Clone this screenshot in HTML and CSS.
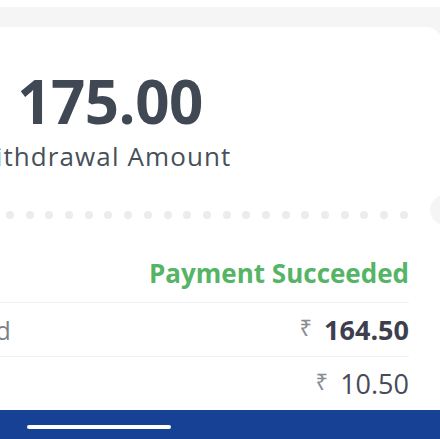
FILE: index.html
```html
<!DOCTYPE html>
<html>
<head>
<meta charset="utf-8">
<link rel="stylesheet" href="styles.css">
</head>
<body>
<div class="screen">
  <div class="top-card"></div>
  <div class="ticket">
    <div class="amount-block">
      <div class="amount">175.00</div>
      <div class="amount-label">Withdrawal Amount</div>
    </div>
    <div class="perforation">
      <span class="dot"></span><span class="dot"></span><span class="dot"></span><span class="dot"></span><span class="dot"></span><span class="dot"></span><span class="dot"></span><span class="dot"></span><span class="dot"></span><span class="dot"></span><span class="dot"></span><span class="dot"></span><span class="dot"></span><span class="dot"></span><span class="dot"></span><span class="dot"></span><span class="dot"></span><span class="dot"></span><span class="dot"></span><span class="dot"></span><span class="dot"></span>
      <span class="notch"></span>
    </div>
    <div class="details">
      <div class="status">Payment Succeeded</div>
      <div class="row">
        <span class="label">Amount Credited</span>
        <span class="value strong"><span class="rupee">₹</span>164.50</span>
      </div>
      <div class="row">
        <span class="label">Fee</span>
        <span class="value"><span class="rupee">₹</span>10.50</span>
      </div>
    </div>
  </div>
  <div class="nav-bar"><span class="home-indicator"></span></div>
</div>
</body>
</html>
```
FILE: styles.css
```css
html, body {
  margin: 0;
  padding: 0;
}
body {
  background: #f5f5f6;
  font-family: "Open Sans", "Noto Sans", sans-serif;
  overflow: hidden;
}
.screen {
  width: 440px;
  height: 439px;
  display: flex;
  flex-direction: column;
  overflow: hidden;
}
.top-card {
  height: 7px;
  background: #ffffff;
  margin-left: -200px;
  margin-right: -6px;
  border-radius: 0 0 16px 16px;
  flex: none;
}
.ticket {
  margin-top: 20px;
  margin-left: -200px;
  margin-right: -2px;
  background: #ffffff;
  border-radius: 16px 16px 0 0;
  flex: 1;
  display: flex;
  flex-direction: column;
  position: relative;
}
.amount-block {
  width: 270px;
  margin-left: 171px;
  padding-top: 36px;
  display: flex;
  flex-direction: column;
  align-items: center;
}
.amount {
  font-size: 60px;
  font-weight: 700;
  color: #3f4853;
  line-height: 76px;
  letter-spacing: -0.5px;
  padding-left: 8px;
}
.amount-label {
  font-size: 26px;
  color: #465059;
  line-height: 34px;
  letter-spacing: 1.1px;
  white-space: nowrap;
  padding-right: 10px;
}
.perforation {
  margin-top: 38px;
  padding-left: 206px;
  padding-right: 34px;
  display: flex;
  justify-content: space-between;
  align-items: center;
  height: 8px;
  position: relative;
}
.dot {
  width: 8px;
  height: 8px;
  border-radius: 50%;
  background: #ececec;
}
.notch {
  position: absolute;
  right: -18px;
  top: -16px;
  width: 30px;
  height: 30px;
  border-radius: 50%;
  background: #f5f5f6;
}
.details {
  padding-left: 11px;
  padding-right: 33px;
  margin-top: 37px;
  display: flex;
  flex-direction: column;
}
.status {
  text-align: right;
  color: #55b466;
  font-weight: 700;
  font-size: 26px;
  line-height: 34px;
  padding-bottom: 12px;
  border-bottom: 1px solid #f2f2f2;
}
.row {
  display: flex;
  justify-content: space-between;
  align-items: center;
  height: 53px;
  border-bottom: 1px solid #f2f2f2;
}
.row:last-child {
  border-bottom: none;
}
.label {
  font-size: 25px;
  color: #7d7f86;
  white-space: nowrap;
}
.value {
  font-size: 27px;
  color: #474a57;
  display: flex;
  align-items: center;
}
.value.strong {
  font-weight: 700;
  color: #3d3f4e;
}
.rupee {
  font-size: 22px;
  font-weight: 400;
  color: #8a8c93;
  margin-right: 12px;
  margin-top: -6px;
}
.nav-bar {
  height: 30px;
  background: #164194;
  flex: none;
  display: flex;
  align-items: center;
  padding-left: 27px;
}
.home-indicator {
  width: 144px;
  height: 4px;
  border-radius: 2px;
  background: #ffffff;
  margin-top: 3px;
}
```
